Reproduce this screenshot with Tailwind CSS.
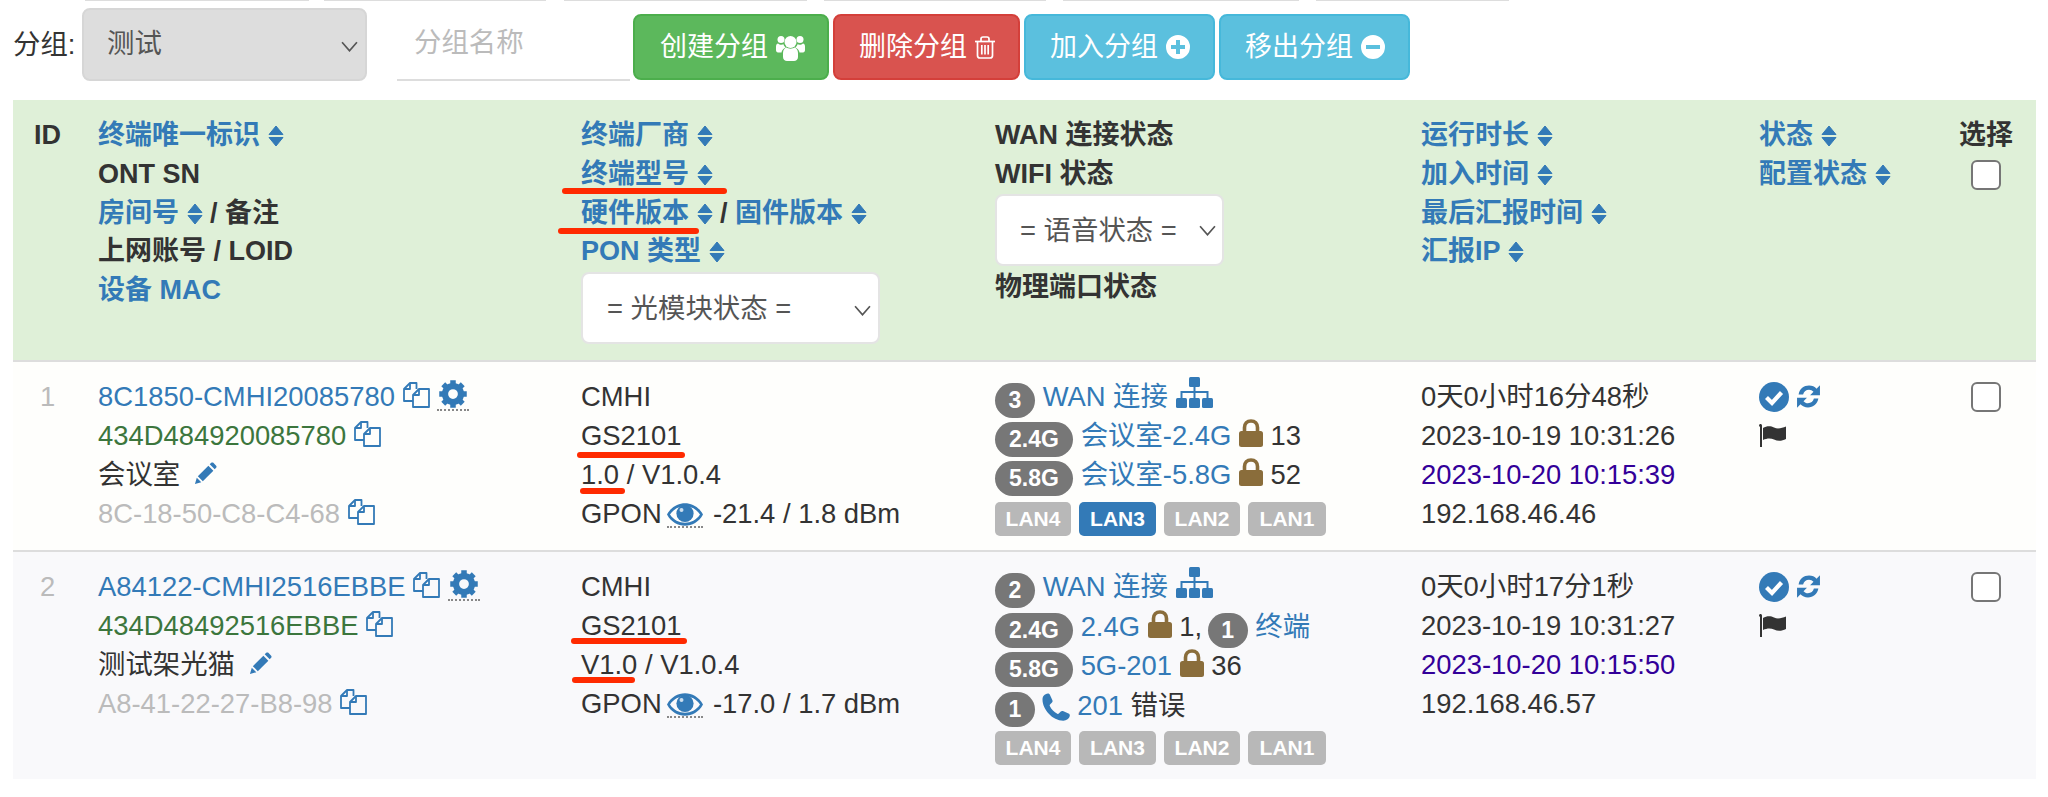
<!DOCTYPE html>
<html lang="zh">
<head>
  <meta charset="UTF-8" />
  <title>终端列表</title>
  <script src="https://cdn.jsdelivr.net/npm/@tailwindcss/browser@4"></script>
</head>
<body class="bg-white text-[#333] text-[27.4px] leading-[39px] font-['Liberation_Sans','Noto_Sans_CJK_SC',sans-serif]">

  <!-- icon set -->
  <svg class="hidden">
    <symbol id="i-sort" viewBox="0 0 16 22"><path fill="currentColor" stroke="currentColor" stroke-linejoin="round" d="M8 1 15 9.5H1ZM1 12.5H15L8 21Z"/></symbol>
    <symbol id="i-copy" viewBox="0 0 27 26"><g fill="none" stroke="currentColor" stroke-width="1.8" stroke-linejoin="round"><path d="M13.5 7V1H7L1 7V19H10"/><path d="M7 1V7H1"/><path d="M16 7H26V25H10V13Z"/><path d="M16 7V13H10"/></g></symbol>
    <symbol id="i-gear" viewBox="0 0 24 24"><g fill="none" stroke="currentColor"><circle cx="12" cy="12" r="6.4" stroke-width="5"/><g stroke-width="4.4"><path d="M12 1V5M12 19V23M1 12H5M19 12H23M4.2 4.2 7 7M17 17 19.8 19.8M4.2 19.8 7 17M17 7 19.8 4.2"/></g></g></symbol>
    <symbol id="i-pencil" viewBox="0 0 24 24"><path fill="currentColor" d="M4 14.8 15 3.8 20.2 9 9.2 20 ZM2.9 16.4 7.6 21.1 1 23ZM16.4 2.4 18 .9C18.7.3 19.6.3 20.2.9L23.1 3.8C23.7 4.4 23.7 5.3 23.1 6L21.6 7.6Z"/></symbol>
    <symbol id="i-eye" viewBox="0 0 36 23"><path fill="currentColor" fill-rule="evenodd" d="M0 11.5C8-3.5 28-3.5 36 11.5 28 26.5 8 26.5 0 11.5ZM3 11.5C10 22.5 26 22.5 33 11.5 26 .5 10 .5 3 11.5Z"/><circle cx="18" cy="10.5" r="8.6" fill="currentColor"/><circle cx="14.5" cy="7" r="2" fill="#fff" opacity=".75"/></symbol>
    <symbol id="i-sitemap" viewBox="0 0 37 31"><g fill="currentColor"><rect x="13" y="0" width="11" height="10" rx="1.5"/><rect x="0" y="21" width="11" height="10" rx="1.5"/><rect x="13" y="21" width="11" height="10" rx="1.5"/><rect x="26" y="21" width="11" height="10" rx="1.5"/><path d="M17.5 10H19.5V14H32.5V21H30.5V16H19.5V21H17.5V16H6.5V21H4.5V14H17.5Z"/></g></symbol>
    <symbol id="i-lock" viewBox="0 0 24 28"><rect x="0" y="12" width="24" height="16" rx="2.5" fill="currentColor"/><path d="M5.5 13V8.5C5.5 4.5 8 2 12 2S18.5 4.5 18.5 8.5V13" fill="none" stroke="currentColor" stroke-width="3.6"/></symbol>
    <symbol id="i-phone" viewBox="0 0 29 28"><path fill="currentColor" d="M7 .5C8 .5 8.6 1 9 2L11.5 7.5C11.8 8.3 11.6 9 11 9.6L9 11.5C8.6 12 8.5 12.5 8.8 13.1 10.5 16.5 13 19 16.3 20.8 16.9 21.1 17.4 21 17.8 20.6L19.8 18.5C20.4 17.9 21.1 17.8 21.9 18.1L27.5 20.6C28.5 21 29 21.8 28.8 22.8 28.3 25.5 25.5 27.7 22.3 27.7 11.5 27.7 1.5 16.5 1.5 6.5 1.5 3.5 3.5 .8 7 .5Z"/></symbol>
    <symbol id="i-check" viewBox="0 0 30 30"><circle cx="15" cy="15" r="15" fill="currentColor"/><path d="M7.5 15.5 13 21 22.5 10.5" fill="none" stroke="#fff" stroke-width="4.2"/></symbol>
    <symbol id="i-refresh" viewBox="0 0 24 24"><g fill="currentColor"><path d="M2.5 10C3.5 4.5 7.5 1.5 12.5 1.5 15.5 1.5 18 2.7 19.7 4.5L23 1.2V10.8H13.5L16.8 7.500C15.700 6.300 14.200 5.500 12.500 5.500 9.700 5.500 7.500 7.300 6.800 10Z"/><path d="M21.5 14C20.5 19.5 16.5 22.5 11.5 22.5 8.5 22.5 6 21.3 4.3 19.5L1 22.8V13.2H10.5L7.2 16.5C8.3 17.7 9.8 18.5 11.5 18.5 14.3 18.5 16.5 16.7 17.2 14Z"/></g></symbol>
    <symbol id="i-flag" viewBox="0 0 27 23"><path fill="currentColor" d="M1.5 0C2.3 0 3 .7 3 1.5L3 23H1V3C.4 2.7 0 2.1 0 1.5 0 .7.7 0 1.5 0ZM4 4C8 1.5 12 2 15 3.5 19 5.3 23 4 27 2.5V15C23 17 19 17.5 15 15.5 12 14 8 14 4 16Z"/></symbol>
    <symbol id="i-users" viewBox="0 0 29 27"><g fill="currentColor"><circle cx="14.5" cy="8" r="6"/><circle cx="5" cy="5.5" r="3.5"/><circle cx="24" cy="5.5" r="3.5"/><path d="M7 19C7 15.5 9 14 10.5 13.5 12 15 17 15 18.5 13.5 20 14 22 15.5 22 19V23C22 25.5 20 27 18 27H11C9 27 7 25.5 7 23Z"/><path d="M0 12.5C0 10.5 1 9.5 2 9.5 3.5 11 6 11 7.5 10.3 8 12 8.8 13 9.8 13.5 7 14.5 5.8 16.5 5.5 18.5H2C.8 18.5 0 17.5 0 16Z"/><path d="M29 12.5C29 10.5 28 9.5 27 9.5 25.5 11 23 11 21.5 10.3 21 12 20.2 13 19.2 13.5 22 14.5 23.2 16.5 23.5 18.5H27C28.2 18.5 29 17.5 29 16Z"/></g></symbol>
    <symbol id="i-trash" viewBox="0 0 20 23"><g fill="none" stroke="currentColor" stroke-width="1.7"><path d="M0 5.5H20"/><path d="M6 5V3C6 1.8 6.8 1 8 1H12C13.2 1 14 1.8 14 3V5"/><path d="M2.5 5.5V19.5C2.5 21 3.5 22 5 22H15C16.5 22 17.5 21 17.5 19.5V5.5"/><path d="M6.8 9V18.5M10 9V18.5M13.2 9V18.5"/></g></symbol>
    <symbol id="i-plus" viewBox="0 0 24 24"><path fill="currentColor" fill-rule="evenodd" d="M12 0A12 12 0 1 1 12 24 12 12 0 1 1 12 0ZM10 5V10H5V14H10V19H14V14H19V10H14V5Z"/></symbol>
    <symbol id="i-minus" viewBox="0 0 24 24"><path fill="currentColor" fill-rule="evenodd" d="M12 0A12 12 0 1 1 12 24 12 12 0 1 1 12 0ZM5 10V14H19V10Z"/></symbol>
    <symbol id="i-chevron" viewBox="0 0 16 10"><path d="M1 1 8 9 15 1" fill="none" stroke="currentColor" stroke-width="1.6"/></symbol>
  </svg>

  <!-- cropped input bottoms above the toolbar -->
  <div class="flex h-[1px] pl-[85px]">
    <div class="w-[224px] bg-[#ddd]"></div>
    <div class="w-[222px] ml-[15px] bg-[#ddd]"></div>
    <div class="w-[243px] ml-[18px] bg-[#ddd]"></div>
    <div class="w-[222px] ml-[17px] bg-[#ddd]"></div>
    <div class="w-[236px] ml-[17px] bg-[#ddd]"></div>
    <div class="w-[193px] ml-[17px] bg-[#ddd]"></div>
  </div>

  <!-- Toolbar -->
  <div class="flex h-[99px] pl-[13px] items-start">
    <span class="mt-[24px] w-[69px]">分组:</span>
    <div class="relative mt-[7px] w-[285px] h-[73px] rounded-[8px] border-2 border-[#d6d6d6] bg-[#ddd] text-[#555] pl-[23px] leading-[67px]">
      测试
      <svg class="absolute right-[7px] top-[31px] w-[17px] h-[11px] text-[#555]"><use href="#i-chevron"/></svg>
    </div>
    <input placeholder="分组名称" class="ml-[30px] mt-[7px] w-[233px] h-[73px] pl-[17px] pb-[2px] border-b-2 border-[#ddd] outline-none placeholder:text-[#bbb]" />
    <div class="flex gap-[4px] ml-[3px] mt-[13px] text-white text-[27px]">
      <button class="flex items-center h-[66px] w-[196px] pl-[25px] gap-[8px] rounded-[8px] border-2 border-[#4cae4c] bg-[#5cb85c]">创建分组<svg class="w-[29px] h-[27px]"><use href="#i-users"/></svg></button>
      <button class="flex items-center h-[66px] w-[187px] pl-[24px] gap-[8px] rounded-[8px] border-2 border-[#d43f3a] bg-[#d9534f]">删除分组<svg class="w-[20px] h-[23px]"><use href="#i-trash"/></svg></button>
      <button class="flex items-center h-[66px] w-[191px] pl-[24px] gap-[8px] rounded-[8px] border-2 border-[#46b8da] bg-[#5bc0de]">加入分组<svg class="w-[24px] h-[24px]"><use href="#i-plus"/></svg></button>
      <button class="flex items-center h-[66px] w-[191px] pl-[24px] gap-[8px] rounded-[8px] border-2 border-[#46b8da] bg-[#5bc0de]">移出分组<svg class="w-[24px] h-[24px]"><use href="#i-minus"/></svg></button>
    </div>
  </div>

  <!-- Table -->
  <table class="ml-[13px] w-[2023px] table-fixed border-collapse">
    <colgroup>
      <col class="w-[69px]" />
      <col class="w-[483px]" />
      <col class="w-[414px]" />
      <col class="w-[426px]" />
      <col class="w-[338px]" />
      <col class="w-[193px]" />
      <col class="w-[100px]" />
    </colgroup>
    <thead>
      <tr class="bg-[#dff0d8] align-top text-left font-bold text-[27px] leading-[38.75px]">
        <th class="h-[261px] pt-[16px] text-center">ID</th>
        <th class="pt-[16px] pl-[16px]">
          <div class="text-[#337ab7]">终端唯一标识 <svg class="inline w-[16px] h-[22px] align-[-3px]"><use href="#i-sort"/></svg></div>
          <div>ONT SN</div>
          <div><span class="text-[#337ab7]">房间号 <svg class="inline w-[16px] h-[22px] align-[-3px]"><use href="#i-sort"/></svg></span> / 备注</div>
          <div>上网账号 / LOID</div>
          <div class="text-[#337ab7]">设备 MAC</div>
        </th>
        <th class="pt-[16px] pl-[16px]">
          <div class="text-[#337ab7]">终端厂商 <svg class="inline w-[16px] h-[22px] align-[-3px]"><use href="#i-sort"/></svg></div>
          <div class="text-[#337ab7]">终端型号 <svg class="inline w-[16px] h-[22px] align-[-3px]"><use href="#i-sort"/></svg></div>
          <div><span class="text-[#337ab7]">硬件版本 <svg class="inline w-[16px] h-[22px] align-[-3px]"><use href="#i-sort"/></svg></span> / <span class="text-[#337ab7]">固件版本 <svg class="inline w-[16px] h-[22px] align-[-3px]"><use href="#i-sort"/></svg></span></div>
          <div class="text-[#337ab7]">PON 类型 <svg class="inline w-[16px] h-[22px] align-[-3px]"><use href="#i-sort"/></svg></div>
          <div class="relative mt-[1px] w-[299px] h-[72px] rounded-[8px] border-2 border-[#e4e4e4] bg-white text-[#555] text-[27.4px] font-normal pl-[24px] leading-[70px]">
            = 光模块状态 =
            <svg class="absolute right-[7px] top-[31px] w-[17px] h-[11px]"><use href="#i-chevron"/></svg>
          </div>
        </th>
        <th class="pt-[16px] pl-[16px]">
          <div>WAN 连接状态</div>
          <div>WIFI 状态</div>
          <div class="relative w-[229px] h-[72px] rounded-[8px] border-2 border-[#e4e4e4] bg-white text-[#555] text-[27.4px] font-normal pl-[23px] leading-[70px]">
            = 语音状态 =
            <svg class="absolute right-[6px] top-[29px] w-[17px] h-[11px]"><use href="#i-chevron"/></svg>
          </div>
          <div class="mt-[2px]">物理端口状态</div>
        </th>
        <th class="pt-[16px] pl-[16px] text-[#337ab7]">
          <div>运行时长 <svg class="inline w-[16px] h-[22px] align-[-3px]"><use href="#i-sort"/></svg></div>
          <div>加入时间 <svg class="inline w-[16px] h-[22px] align-[-3px]"><use href="#i-sort"/></svg></div>
          <div>最后汇报时间 <svg class="inline w-[16px] h-[22px] align-[-3px]"><use href="#i-sort"/></svg></div>
          <div>汇报IP <svg class="inline w-[16px] h-[22px] align-[-3px]"><use href="#i-sort"/></svg></div>
        </th>
        <th class="pt-[16px] pl-[16px] text-[#337ab7]">
          <div>状态 <svg class="inline w-[16px] h-[22px] align-[-3px]"><use href="#i-sort"/></svg></div>
          <div>配置状态 <svg class="inline w-[16px] h-[22px] align-[-3px]"><use href="#i-sort"/></svg></div>
        </th>
        <th class="pt-[16px] text-center">
          <div>选择</div>
          <input type="checkbox" class="appearance-none block mx-auto mt-[5px] w-[30px] h-[30px] rounded-[6px] border-2 border-[#767676] bg-white" />
        </th>
      </tr>
    </thead>
    <tbody class="align-top">
      <tr class="bg-[#fefefc] border-t-2 border-[#ddd]">
        <td class="h-[190px] pt-[15px] text-center text-[#bbb]">1</td>
        <td class="pt-[15px] pl-[16px]">
          <div class="text-[#337ab7]">8C1850-CMHI20085780 <svg class="inline w-[27px] h-[26px] align-[-2px]"><use href="#i-copy"/></svg> <span class="inline-block border-b-2 border-dotted border-[#888] leading-[32px] align-[-5px]"><svg class="w-[32px] h-[30px]"><use href="#i-gear"/></svg></span></div>
          <div class="text-[#3c763d]">434D484920085780 <svg class="inline w-[27px] h-[26px] align-[-2px] text-[#337ab7]"><use href="#i-copy"/></svg></div>
          <div>会议室 <svg class="inline ml-[6px] w-[23px] h-[23px] align-[-1px] text-[#337ab7]"><use href="#i-pencil"/></svg></div>
          <div class="text-[#bbb]">8C-18-50-C8-C4-68 <svg class="inline w-[27px] h-[26px] align-[-2px] text-[#337ab7]"><use href="#i-copy"/></svg></div>
        </td>
        <td class="pt-[15px] pl-[16px]">
          <div>CMHI</div>
          <div>GS2101</div>
          <div>1.0 / V1.0.4</div>
          <div>GPON <span class="inline-block -ml-[2px] mr-[2px] border-b-2 border-dotted border-[#888] leading-[24px] align-[-5px] text-[#337ab7]"><svg class="w-[36px] h-[23px]"><use href="#i-eye"/></svg></span> -21.4 / 1.8 dBm</div>
        </td>
        <td class="pt-[15px] pl-[16px]">
          <div class="h-[39px] whitespace-nowrap"><span class="inline-block h-[35px] w-[40px] text-center leading-[35px] rounded-full bg-[#777] text-white font-bold text-[23px] align-[-2px]">3</span> <span class="text-[#337ab7]">WAN 连接</span> <svg class="inline w-[37px] h-[31px] align-[-2px] text-[#337ab7]"><use href="#i-sitemap"/></svg></div>
          <div class="h-[39px] whitespace-nowrap"><span class="inline-block h-[35px] w-[78px] text-center leading-[35px] rounded-full bg-[#777] text-white font-bold text-[23px] align-[-2px]">2.4G</span> <span class="text-[#337ab7]">会议室-2.4G</span> <svg class="inline w-[24px] h-[28px] align-[-2px] text-[#8a6d3b]"><use href="#i-lock"/></svg> 13</div>
          <div class="h-[39px] whitespace-nowrap"><span class="inline-block h-[35px] w-[78px] text-center leading-[35px] rounded-full bg-[#777] text-white font-bold text-[23px] align-[-2px]">5.8G</span> <span class="text-[#337ab7]">会议室-5.8G</span> <svg class="inline w-[24px] h-[28px] align-[-2px] text-[#8a6d3b]"><use href="#i-lock"/></svg> 52</div>
          <div class="flex gap-[8px] mt-[8px] text-white font-bold text-[21px] leading-[34px] text-center">
            <span class="w-[76px] rounded-[5px] bg-[#b8b8b8]">LAN4</span>
            <span class="w-[77px] rounded-[5px] bg-[#337ab7]">LAN3</span>
            <span class="w-[76px] rounded-[5px] bg-[#b8b8b8]">LAN2</span>
            <span class="w-[78px] rounded-[5px] bg-[#b8b8b8]">LAN1</span>
          </div>
        </td>
        <td class="pt-[15px] pl-[16px]">
          <div>0天0小时16分48秒</div>
          <div>2023-10-19 10:31:26</div>
          <div class="text-[#330099]">2023-10-20 10:15:39</div>
          <div>192.168.46.46</div>
        </td>
        <td class="pt-[15px] pl-[16px]">
          <div class="flex items-center gap-[7px] h-[39px] text-[#337ab7]"><svg class="w-[30px] h-[30px]"><use href="#i-check"/></svg><svg class="w-[25px] h-[25px]"><use href="#i-refresh"/></svg></div>
          <div class="flex items-center h-[39px]"><svg class="w-[27px] h-[23px]"><use href="#i-flag"/></svg></div>
        </td>
        <td class="pt-[20px]"><input type="checkbox" class="appearance-none block mx-auto w-[30px] h-[30px] rounded-[6px] border-2 border-[#767676] bg-white" /></td>
      </tr>
      <tr class="bg-[#f9f9fb] border-t-2 border-[#ddd]">
        <td class="h-[228px] pt-[15px] text-center text-[#bbb]">2</td>
        <td class="pt-[15px] pl-[16px]">
          <div class="text-[#337ab7]">A84122-CMHI2516EBBE <svg class="inline w-[27px] h-[26px] align-[-2px]"><use href="#i-copy"/></svg> <span class="inline-block border-b-2 border-dotted border-[#888] leading-[32px] align-[-5px]"><svg class="w-[32px] h-[30px]"><use href="#i-gear"/></svg></span></div>
          <div class="text-[#3c763d]">434D48492516EBBE <svg class="inline w-[27px] h-[26px] align-[-2px] text-[#337ab7]"><use href="#i-copy"/></svg></div>
          <div>测试架光猫 <svg class="inline ml-[6px] w-[23px] h-[23px] align-[-1px] text-[#337ab7]"><use href="#i-pencil"/></svg></div>
          <div class="text-[#bbb]">A8-41-22-27-B8-98 <svg class="inline w-[27px] h-[26px] align-[-2px] text-[#337ab7]"><use href="#i-copy"/></svg></div>
        </td>
        <td class="pt-[15px] pl-[16px]">
          <div>CMHI</div>
          <div>GS2101</div>
          <div>V1.0 / V1.0.4</div>
          <div>GPON <span class="inline-block -ml-[2px] mr-[2px] border-b-2 border-dotted border-[#888] leading-[24px] align-[-5px] text-[#337ab7]"><svg class="w-[36px] h-[23px]"><use href="#i-eye"/></svg></span> -17.0 / 1.7 dBm</div>
        </td>
        <td class="pt-[15px] pl-[16px]">
          <div class="h-[39.5px] whitespace-nowrap"><span class="inline-block h-[35px] w-[40px] text-center leading-[35px] rounded-full bg-[#777] text-white font-bold text-[23px] align-[-2px]">2</span> <span class="text-[#337ab7]">WAN 连接</span> <svg class="inline w-[37px] h-[31px] align-[-2px] text-[#337ab7]"><use href="#i-sitemap"/></svg></div>
          <div class="h-[39.5px] whitespace-nowrap"><span class="inline-block h-[35px] w-[78px] text-center leading-[35px] rounded-full bg-[#777] text-white font-bold text-[23px] align-[-2px]">2.4G</span> <span class="text-[#337ab7]">2.4G</span> <svg class="inline w-[24px] h-[28px] align-[-2px] text-[#8a6d3b]"><use href="#i-lock"/></svg> 1, <span class="inline-block -ml-[2px] h-[35px] w-[40px] text-center leading-[35px] rounded-full bg-[#777] text-white font-bold text-[23px] align-[-2px]">1</span> <span class="text-[#337ab7]">终端</span></div>
          <div class="h-[39.5px] whitespace-nowrap"><span class="inline-block h-[35px] w-[78px] text-center leading-[35px] rounded-full bg-[#777] text-white font-bold text-[23px] align-[-2px]">5.8G</span> <span class="text-[#337ab7]">5G-201</span> <svg class="inline w-[24px] h-[28px] align-[-2px] text-[#8a6d3b]"><use href="#i-lock"/></svg> 36</div>
          <div class="h-[39.5px] whitespace-nowrap"><span class="inline-block h-[35px] w-[40px] text-center leading-[35px] rounded-full bg-[#777] text-white font-bold text-[23px] align-[-2px]">1</span> <svg class="inline -ml-[2px] w-[29px] h-[28px] text-[#337ab7]"><use href="#i-phone"/></svg> <span class="text-[#337ab7]">201</span> 错误</div>
          <div class="flex gap-[8px] mt-[6px] text-white font-bold text-[21px] leading-[34px] text-center">
            <span class="w-[76px] rounded-[5px] bg-[#b8b8b8]">LAN4</span>
            <span class="w-[77px] rounded-[5px] bg-[#b8b8b8]">LAN3</span>
            <span class="w-[76px] rounded-[5px] bg-[#b8b8b8]">LAN2</span>
            <span class="w-[78px] rounded-[5px] bg-[#b8b8b8]">LAN1</span>
          </div>
        </td>
        <td class="pt-[15px] pl-[16px]">
          <div>0天0小时17分1秒</div>
          <div>2023-10-19 10:31:27</div>
          <div class="text-[#330099]">2023-10-20 10:15:50</div>
          <div>192.168.46.57</div>
        </td>
        <td class="pt-[15px] pl-[16px]">
          <div class="flex items-center gap-[7px] h-[39px] text-[#337ab7]"><svg class="w-[30px] h-[30px]"><use href="#i-check"/></svg><svg class="w-[25px] h-[25px]"><use href="#i-refresh"/></svg></div>
          <div class="flex items-center h-[39px]"><svg class="w-[27px] h-[23px]"><use href="#i-flag"/></svg></div>
        </td>
        <td class="pt-[20px]"><input type="checkbox" class="appearance-none block mx-auto w-[30px] h-[30px] rounded-[6px] border-2 border-[#767676] bg-white" /></td>
      </tr>
    </tbody>
  </table>

  <!-- red marker strokes drawn over the screenshot -->
  <div class="absolute left-[562px] top-[188px] w-[165px] h-[6px] rounded-full bg-[#ff2a00]"></div>
  <div class="absolute left-[558px] top-[228px] w-[141px] h-[6px] rounded-full bg-[#ff2a00]"></div>
  <div class="absolute left-[577px] top-[452px] w-[108px] h-[6px] rounded-full bg-[#ff2a00]"></div>
  <div class="absolute left-[580px] top-[488px] w-[45px] h-[6px] rounded-full bg-[#ff2a00]"></div>
  <div class="absolute left-[571px] top-[638px] w-[116px] h-[6px] rounded-full bg-[#ff2a00]"></div>
  <div class="absolute left-[572px] top-[677px] w-[63px] h-[6px] rounded-full bg-[#ff2a00]"></div>

</body>
</html>
